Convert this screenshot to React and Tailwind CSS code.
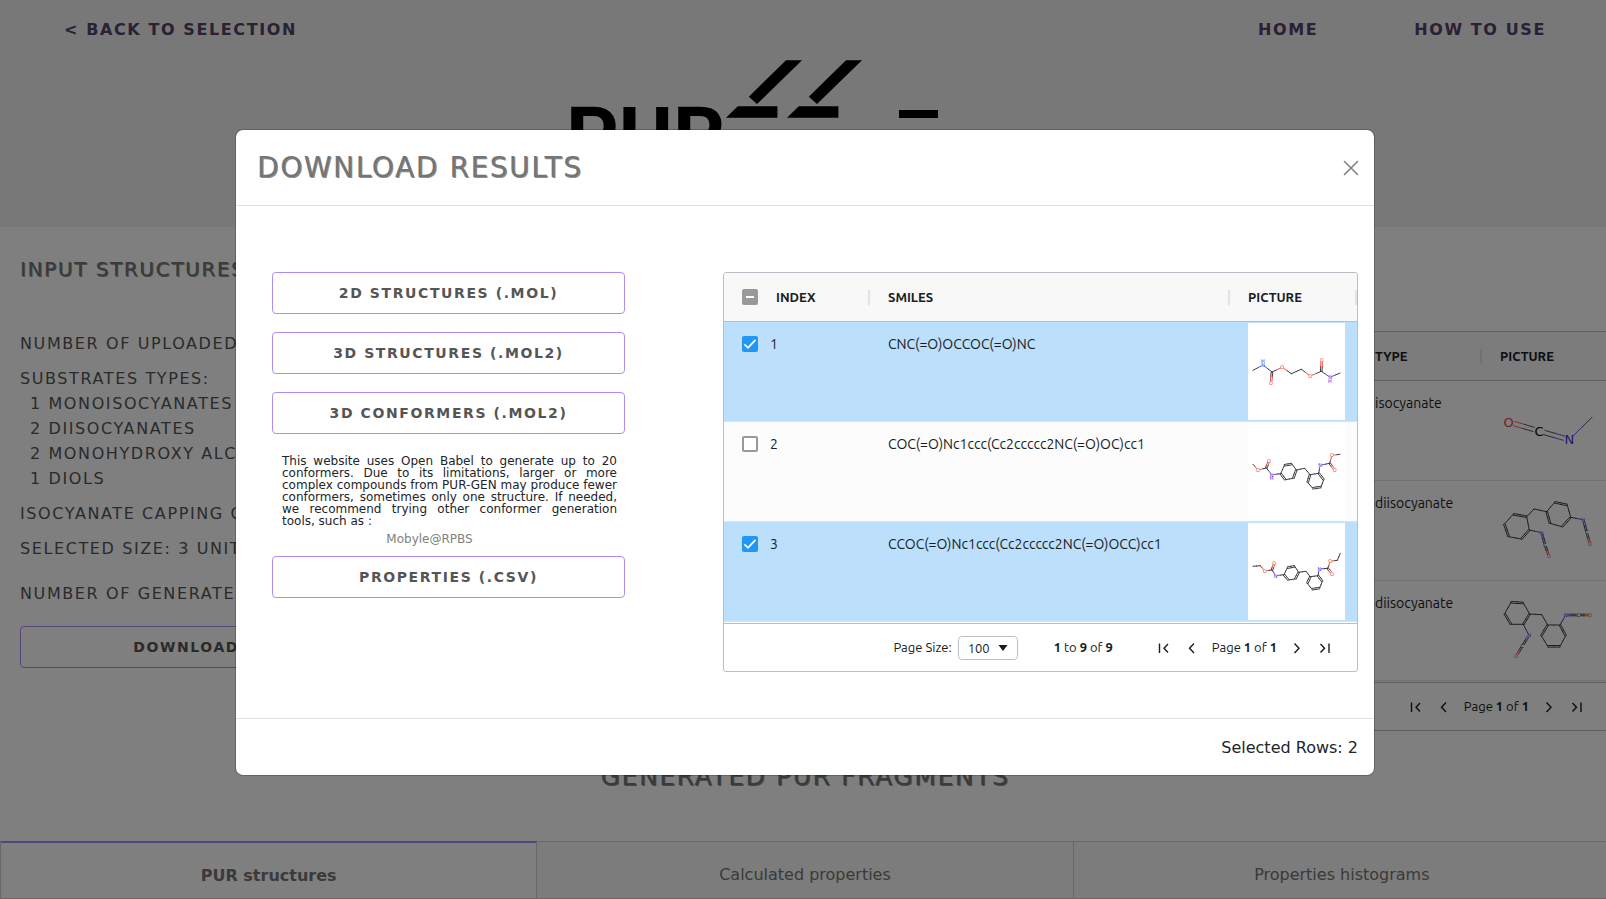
import { useId } from 'react';

const ATOM_COLORS = { C: '#2b2b2b', N: '#3a33d8', O: '#e8403c' };

const mol = (atoms, bonds) => ({ atoms, bonds });
const ring = (a, b, c, d, e, f) => [[a, b, 1], [b, c, 2], [c, d, 1], [d, e, 2], [e, f, 1], [f, a, 2]];

const ethyleneDicarbamate = mol(
  [[5, 47.3], [15, 42, 'N', 'up'], [24, 49], [23, 60, 'O'], [34.3, 44.3, 'O'], [43.3, 50.7], [53.3, 46.3], [62.3, 53, 'O'], [73.3, 48.3], [73.7, 37, 'O'], [82, 54.3, 'N', 'down'], [92, 50]],
  [[0, 1, 1], [1, 2, 1], [2, 3, 2], [2, 4, 1], [4, 5, 1], [5, 6, 1], [6, 7, 1], [7, 8, 1], [8, 9, 2], [8, 10, 1], [10, 11, 1]]
);
const methylDicarbamate = mol(
  [[5, 41.3], [10, 47, 'O'], [18.3, 45], [21, 37.7, 'O'], [23.7, 51.7, 'N', 'down'],
    [32.7, 50.7], [36.3, 42.3], [44, 41], [48.3, 47], [45.3, 55.3], [37.3, 56.7], [56.7, 45.3],
    [62, 51.7], [70.7, 50.3], [75.7, 56.7], [73, 64], [64.7, 65.3], [59.7, 59.3],
    [72, 42.3, 'N'], [81.7, 40.3], [86.7, 47, 'O'], [84, 32.3, 'O'], [92, 31.3]],
  [[0, 1, 1], [1, 2, 1], [2, 3, 2], [2, 4, 1], [4, 5, 1], ...ring(5, 6, 7, 8, 9, 10), [8, 11, 1], [11, 12, 1], ...ring(12, 13, 14, 15, 16, 17), [13, 18, 1], [18, 19, 1], [19, 20, 2], [19, 21, 1], [21, 22, 1]]
);
const ethylDicarbamate = mol(
  [[5, 43.3], [12.3, 42.7], [16.7, 48, 'O'], [24, 47], [26.3, 40, 'O'], [27.7, 52.7, 'N'],
    [36, 51.7], [39.3, 44.7], [46.7, 43.3], [50.7, 49.3], [47.3, 56], [40.3, 57], [58, 48.3],
    [62.3, 53.7], [70, 52.7], [74.3, 58.3], [71.7, 65], [64, 66.3], [59.3, 60.3],
    [71.3, 46, 'N'], [79.7, 45.3], [84, 50.7, 'O'], [82.3, 38.3, 'O'], [89.3, 37.3], [92.3, 30.3]],
  [[0, 1, 1], [1, 2, 1], [2, 3, 1], [3, 4, 2], [3, 5, 1], [5, 6, 1], ...ring(6, 7, 8, 9, 10, 11), [9, 12, 1], [12, 13, 1], ...ring(13, 14, 15, 16, 17, 18), [14, 19, 1], [19, 20, 1], [20, 21, 2], [20, 22, 1], [22, 23, 1], [23, 24, 1]]
);
const methylIsocyanate = mol(
  [[8.7, 40, 'O'], [39, 49, 'C'], [69.3, 57.7, 'N'], [92, 35.3]],
  [[0, 1, 2], [1, 2, 2], [2, 3, 1]]
);
const diisocyanateA = mol(
  [[26.7, 34.7], [29.3, 48], [21.3, 57], [8.7, 54.7], [4.3, 42], [13.3, 32.3], [34, 27],
    [46.7, 29.7], [54.7, 20.3], [67.3, 23], [70.7, 35.3], [62, 44.7], [50, 41.3],
    [83.3, 37.7, 'N'], [86.7, 50.5, 'C'], [90, 62, 'O'], [41.7, 50.7, 'N'], [45, 63, 'C'], [49, 74.3, 'O']],
  [...ring(0, 1, 2, 3, 4, 5), [0, 6, 1], [6, 7, 1], ...ring(7, 8, 9, 10, 11, 12), [10, 13, 1], [13, 14, 2], [14, 15, 2], [1, 16, 1], [16, 17, 2], [17, 18, 2]]
);
const diisocyanateB = mol(
  [[11, 20.3], [23.3, 21], [29.7, 32], [23.3, 42.3], [11, 42.3], [4.7, 31.7], [41.7, 32.7],
    [47.7, 43], [60, 43], [65.7, 53.7], [60, 64.3], [47.7, 64.3], [41.3, 53.7],
    [65.7, 33, 'N'], [78.3, 33, 'C'], [90.3, 33, 'O'], [29, 53.3, 'N'], [22.3, 64, 'C'], [16.3, 74, 'O']],
  [...ring(1, 2, 3, 4, 5, 0), [2, 6, 1], [6, 7, 1], ...ring(7, 8, 9, 10, 11, 12), [8, 13, 1], [13, 14, 2], [14, 15, 2], [3, 16, 1], [16, 17, 2], [17, 18, 2]]
);

function Molecule({ data, size = 5, gap = 2, spread = 0.8, stroke = 0.9 }) {
  const { atoms, bonds } = data;
  const lines = [];
  bonds.forEach(([i, j, order]) => {
    const [x1, y1, e1 = 'C'] = atoms[i];
    const [x2, y2, e2 = 'C'] = atoms[j];
    const len = Math.hypot(x2 - x1, y2 - y1);
    const ux = (x2 - x1) / len;
    const uy = (y2 - y1) / len;
    const g1 = atoms[i][2] ? gap : 0;
    const g2 = atoms[j][2] ? gap : 0;
    const offsets = order === 2 ? [-spread, spread] : [0];
    offsets.forEach((o) => {
      const ox = -uy * o;
      const oy = ux * o;
      const ax = x1 + ux * g1 + ox;
      const ay = y1 + uy * g1 + oy;
      const bx = x2 - ux * g2 + ox;
      const by = y2 - uy * g2 + oy;
      const mx = (ax + bx) / 2;
      const my = (ay + by) / 2;
      lines.push([ax, ay, mx, my, ATOM_COLORS[e1]], [mx, my, bx, by, ATOM_COLORS[e2]]);
    });
  });
  return (
    <svg viewBox="0 0 97 97" className="mt-px block h-[97px] w-[97px] bg-white" aria-hidden="true">
      {lines.map(([ax, ay, bx, by, c], k) => (
        <line key={k} x1={ax} y1={ay} x2={bx} y2={by} stroke={c} strokeWidth={stroke} strokeLinecap="round" />
      ))}
      {atoms.map(([x, y, el, h], k) =>
        el ? (
          <g key={k} fill={el === 'C' ? '#000' : ATOM_COLORS[el]} fontSize={size} textAnchor="middle" className="font-['DejaVu_Sans',sans-serif]">
            <text x={x} y={y + size * 0.36}>{el}</text>
            {h && <text x={x} y={y + size * 0.36 + (h === 'up' ? -3.8 : 3.8)}>H</text>}
          </g>
        ) : null
      )}
    </svg>
  );
}

function Check({ label, state }) {
  const tone =
    state === 'checked'
      ? 'border-[#2196f3] bg-[#2196f3]'
      : state === 'mixed'
        ? 'border-[#999999] bg-[#999999]'
        : 'border-[#999999] bg-white';
  return (
    <label className="grid size-4 shrink-0">
      <input
        type="checkbox"
        aria-label={label}
        defaultChecked={state === 'checked'}
        className={`col-start-1 row-start-1 size-4 appearance-none rounded-[2px] border-2 ${tone}`}
      />
      {state !== 'empty' && (
        <svg viewBox="0 0 16 16" className="pointer-events-none col-start-1 row-start-1 size-4" fill="none" stroke="#fff" strokeWidth="1.800">
          {state === 'checked' ? <path d="M2.500 8.300 6 11.800l7.500-8" /> : <path d="M4 8h8" />}
        </svg>
      )}
    </label>
  );
}

function HeadCell({ children, check }) {
  return (
    <th className="h-[49px] border-b border-[#babfc7] bg-[#f8f8f8] p-0 pl-[18px] text-left font-bold">
      <div className="flex items-center justify-between">
        <div className="flex items-center gap-[18px]">
          {check}
          <span className="pt-[2px]">{children}</span>
        </div>
        <span className="h-[15px] w-[2px] bg-[#dde2eb]" />
      </div>
    </th>
  );
}

const PAGER_ICONS = {
  first: ['First page', 'M3.500 3.500v9.500M12 4 8 8.200l4 4.300'],
  prev: ['Previous page', 'M10 3.500 5.500 8.200l4.500 4.800'],
  next: ['Next page', 'M5.500 3.500 10 8.200l-4.500 4.800'],
  last: ['Last page', 'M12 3.500v9.500M3.500 4l4 4.200-4 4.300'],
};

function PagerButton({ kind }) {
  const [label, d] = PAGER_ICONS[kind];
  return (
    <button type="button" aria-label={label} className="size-4">
      <svg viewBox="0 0 16 16" className="size-4" fill="none" stroke="#181d1f" strokeWidth="1.400">
        <path d={d} />
      </svg>
    </button>
  );
}

function GridPanel({ children, caption, heads, widths }) {
  const id = useId();
  return (
    <div className="flex h-[400px] flex-col overflow-hidden rounded-[3px] border border-[#babfc7] bg-white font-[Ubuntu,'Noto_Sans',sans-serif] text-[#181d1f]">
      <div className="h-[350px] overflow-hidden">
        <table aria-label={caption} className="w-full table-fixed border-separate border-spacing-0 text-[14px]">
          <colgroup>
            {widths.map((w, i) => (
              <col key={i} className={w} />
            ))}
          </colgroup>
          <thead className="text-[13px]">
            <tr>{heads}</tr>
          </thead>
          <tbody>{children}</tbody>
        </table>
      </div>
      <div className="flex flex-1 items-center justify-end border-t border-[#babfc7] pr-6 text-[13px]">
        <label htmlFor={id} className="mr-[6px]">Page Size:</label>
        <div className="mr-9 grid items-center">
          <select id={id} defaultValue="100" className="col-start-1 row-start-1 h-6 w-[60px] appearance-none rounded-[4px] border border-[#babfc7] bg-white pl-[9px] leading-[22px]">
            <option>20</option>
            <option>50</option>
            <option>100</option>
          </select>
          <svg viewBox="0 0 10 6" className="pointer-events-none col-start-1 row-start-1 mr-[10px] h-[6px] w-[10px] justify-self-end" fill="#181d1f">
            <path d="M.5 0h9L5 6z" />
          </svg>
        </div>
        <span className="mr-[43px]"><b>1</b> to <b>9</b> of <b>9</b></span>
        <div className="flex items-center gap-3">
          <PagerButton kind="first" />
          <PagerButton kind="prev" />
          <span>Page <b>1</b> of <b>1</b></span>
          <PagerButton kind="next" />
          <PagerButton kind="last" />
        </div>
      </div>
    </div>
  );
}

const RESULT_ROWS = [
  { n: 1, smiles: 'CNC(=O)OCCOC(=O)NC', data: ethyleneDicarbamate, on: true },
  { n: 2, smiles: 'COC(=O)Nc1ccc(Cc2ccccc2NC(=O)OC)cc1', data: methylDicarbamate, on: false },
  { n: 3, smiles: 'CCOC(=O)Nc1ccc(Cc2ccccc2NC(=O)OCC)cc1', data: ethylDicarbamate, on: true },
];

const INPUT_ROWS = [
  { type: 'isocyanate', smiles: 'CN=C=O', data: methylIsocyanate, large: true },
  { type: 'diisocyanate', smiles: 'O=C=Nc1ccc(Cc2ccccc2N=C=O)cc1', data: diisocyanateA },
  { type: 'diisocyanate', smiles: 'O=C=Nc1ccccc1Cc1ccccc1N=C=O', data: diisocyanateB },
];

function ResultsGrid() {
  return (
    <GridPanel
      caption="Generated fragments"
      widths={['w-[146px]', 'w-auto', 'w-[127px]']}
      heads={
        <>
          <HeadCell check={<Check label="Select all" state="mixed" />}>INDEX</HeadCell>
          <HeadCell>SMILES</HeadCell>
          <HeadCell>PICTURE</HeadCell>
        </>
      }
    >
      {RESULT_ROWS.map((r) => (
        <tr key={r.n} className={r.on ? 'bg-[#bcdffb]' : 'bg-[#fcfcfc]'}>
          <td className="h-[100px] border-b border-[#dde2eb] p-0 pl-[18px] align-top leading-[44px]">
            <div className="flex items-center gap-3">
              <Check label={`Select row ${r.n}`} state={r.on ? 'checked' : 'empty'} />
              {r.n}
            </div>
          </td>
          <td className="border-b border-[#dde2eb] p-0 pl-[18px] align-top leading-[44px]">{r.smiles}</td>
          <td className="border-b border-[#dde2eb] p-0 pl-[18px] align-top"><Molecule data={r.data} /></td>
        </tr>
      ))}
    </GridPanel>
  );
}

function InputsGrid() {
  return (
    <GridPanel
      caption="Input structures"
      widths={['w-[110px]', 'w-auto', 'w-[125px]', 'w-[127px]']}
      heads={
        <>
          <HeadCell>INDEX</HeadCell>
          <HeadCell>SMILES</HeadCell>
          <HeadCell>TYPE</HeadCell>
          <HeadCell>PICTURE</HeadCell>
        </>
      }
    >
      {INPUT_ROWS.map((r, i) => (
        <tr key={i} className="bg-white leading-[44px]">
          <td className="h-[100px] border-b border-[#dde2eb] p-0 pl-[18px] align-top">{i + 1}</td>
          <td className="border-b border-[#dde2eb] p-0 pl-[18px] align-top">{r.smiles}</td>
          <td className="border-b border-[#dde2eb] p-0 pl-[18px] align-top">{r.type}</td>
          <td className="border-b border-[#dde2eb] p-0 pl-[18px] align-top">
            {r.large ? <Molecule data={r.data} size={13} gap={5.5} spread={2.2} stroke={0.8} /> : <Molecule data={r.data} />}
          </td>
        </tr>
      ))}
    </GridPanel>
  );
}

function OutlineButton({ children }) {
  return (
    <button type="button" className="h-[42px] w-full rounded-[4px] border border-[#b08df5] bg-white text-[14px] font-bold tracking-[0.1rem] text-[#555555]">
      {children}
    </button>
  );
}

function Logo() {
  return (
    <svg viewBox="0 0 370 110" className="mx-auto block h-[110px] w-[370px]" role="img" aria-label="PUR-GEN">
      <text x="-3" y="106" fontSize="82" className="font-[Roboto,sans-serif] font-bold">PUR</text>
      <path d="M217 1.300h16L188 45l-8.200-7.300zM277 1.300h16L248 45l-8.200-7.300zM157 58.700l11.800-11.400h39.600v11.400zM218 58.700l11.800-11.400h39.600v11.400zM330 51h39v8h-39z" />
    </svg>
  );
}

function BackgroundPage() {
  return (
    <div className="-mr-1">
      <header className="h-[227px] bg-[#f0f0f0]">
        <nav className="flex h-[59px] items-center pl-16 pr-16 text-[16px] font-bold tracking-[0.1rem] text-[#54426a]">
          <a href="#selection" className="mr-auto">&lt; BACK TO SELECTION</a>
          <a href="#home" className="mr-24">HOME</a>
          <a href="#how">HOW TO USE</a>
        </nav>
        <div className="pr-[102px]">
          <Logo />
        </div>
      </header>
      <main>
        <div className="flex justify-between">
          <section className="w-[456px] pl-5 pr-[18px] pt-[27px] tracking-[0.1rem] text-[#555555]">
            <h2 className="text-[20px] font-medium leading-[30px] text-[#757575] [text-shadow:1px_1px_0_#8c8c8c]">INPUT STRUCTURES</h2>
            <div className="mt-[47px] flex flex-col gap-[10px] text-[16px] leading-[25px]">
              <p>NUMBER OF UPLOADED MOLECULES: 6</p>
              <div>
                <p>SUBSTRATES TYPES:</p>
                <ul className="pl-[10px]">
                  <li>1 MONOISOCYANATES</li>
                  <li>2 DIISOCYANATES</li>
                  <li>2 MONOHYDROXY ALCOHOLS</li>
                  <li>1 DIOLS</li>
                </ul>
              </div>
              <p>ISOCYANATE CAPPING GROUP: NO</p>
              <p>SELECTED SIZE: 3 UNITS</p>
              <p className="mt-[10px]">NUMBER OF GENERATED: 9</p>
            </div>
            <div className="mt-5">
              <OutlineButton>DOWNLOAD RESULTS</OutlineButton>
            </div>
          </section>
          <section className="mt-[104px] w-[635px] shrink-0">
            <InputsGrid />
          </section>
        </div>
        <h2 className="mb-[49px] mt-[31px] text-center text-[25px] font-medium leading-[30px] tracking-[0.1rem] text-[#757575] [text-shadow:1px_1px_0_#8c8c8c]">GENERATED PUR FRAGMENTS</h2>
        <div className="grid h-[58px] grid-cols-3 border-l border-[#d0d0d0] text-[16px] text-[#757575]">
          <button type="button" className="border-b border-r border-t-2 border-b-[#d0d0d0] border-r-[#d0d0d0] border-t-[#a78bfa] bg-white pt-[10px] font-bold">PUR structures</button>
          <button type="button" className="border-b border-r border-t border-[#d0d0d0] bg-[#f8f8f8] pt-[10px]">Calculated properties</button>
          <button type="button" className="border-b border-t border-[#d0d0d0] bg-[#f8f8f8] pt-[10px]">Properties histograms</button>
        </div>
      </main>
    </div>
  );
}

function DownloadDialog() {
  return (
    <div role="dialog" aria-modal="true" aria-labelledby="dialog-title" className="w-full max-w-[1140px] rounded-[8px] border border-black/20 bg-white bg-clip-padding text-[#212529]">
      <div className="flex h-[76px] items-center justify-between border-b border-[#dee2e6] pl-[21px] pr-[15px]">
        <h1 id="dialog-title" className="text-[28px] font-medium tracking-[0.1rem] text-[#757575] [text-shadow:1px_1px_0_#8c8c8c]">DOWNLOAD RESULTS</h1>
        <button type="button" aria-label="Close" className="size-4">
          <svg viewBox="0 0 16 16" className="size-4" stroke="#808080" strokeWidth="1.600" strokeLinecap="round">
            <path d="M1.500 1.500l13 13M14.500 1.500l-13 13" />
          </svg>
        </button>
      </div>
      <div className="flex pb-[46px] pl-9 pr-4 pt-[66px]">
        <div className="w-[353px] shrink-0">
          <div className="flex flex-col gap-[18px]">
            <OutlineButton>2D STRUCTURES (.MOL)</OutlineButton>
            <OutlineButton>3D STRUCTURES (.MOL2)</OutlineButton>
            <OutlineButton>3D CONFORMERS (.MOL2)</OutlineButton>
          </div>
          <p className="ml-[10px] mr-[8px] mt-[21px] text-justify text-[12px] leading-[12px]">
            This website uses Open Babel to generate up to 20 conformers. Due to its limitations, larger or more complex compounds from PUR-GEN may produce fewer conformers, sometimes only one structure. If needed, we recommend trying other conformer generation tools, such as :
          </p>
          <p className="mb-[5px] pr-[38px] text-center text-[12px] leading-[24px] text-[#808080]">
            <a href="#mobyle">Mobyle@RPBS</a>
          </p>
          <OutlineButton>PROPERTIES (.CSV)</OutlineButton>
        </div>
        <div className="ml-[98px] min-w-0 flex-1">
          <ResultsGrid />
        </div>
      </div>
      <div className="flex h-[57px] items-center justify-end border-t border-[#dee2e6] pr-4 pt-[2px] text-[16px]">Selected Rows: 2</div>
    </div>
  );
}

export default function App() {
  return (
    <div className="relative h-screen overflow-hidden bg-white font-['DejaVu_Sans',sans-serif]">
      <BackgroundPage />
      <div className="absolute inset-0 flex items-start justify-center bg-black/50 pl-1 pt-[129px]">
        <DownloadDialog />
      </div>
    </div>
  );
}
